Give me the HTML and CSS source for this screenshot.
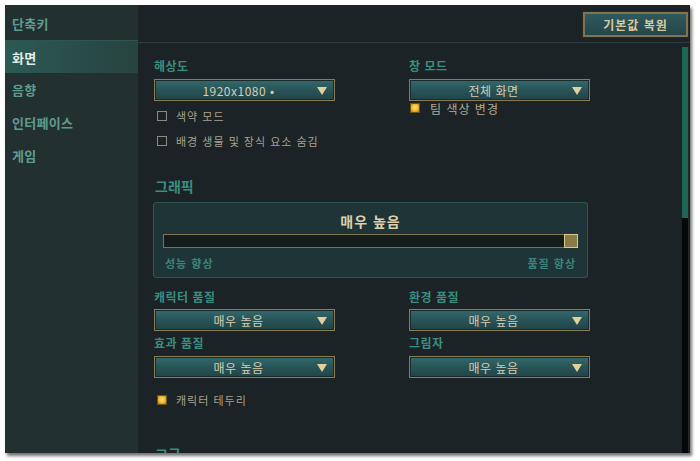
FILE: index.html
```html
<!DOCTYPE html>
<html lang="ko">
<head>
<meta charset="utf-8">
<link rel="stylesheet" href="styles.css">
</head>
<body>
<div class="window">
  <nav class="sidebar">
    <div class="nav-item">단축키</div>
    <div class="nav-item active">화면</div>
    <div class="nav-item">음향</div>
    <div class="nav-item">인터페이스</div>
    <div class="nav-item">게임</div>
  </nav>
  <div class="main">
    <header class="topbar">
      <button class="reset-btn">기본값 복원</button>
    </header>
    <div class="body-row">
      <div class="content">
        <div class="grid">
          <div class="col">
            <div class="label first">해상도</div>
            <div class="dropdown"><span class="dd-text">1920x1080 •</span><span class="arrow"></span></div>
            <div class="check gap"><span class="box"></span><span class="check-text">색약 모드</span></div>
            <div class="check gap"><span class="box"></span><span class="check-text">배경 생물 및 장식 요소 숨김</span></div>
          </div>
          <div class="col">
            <div class="label first">창 모드</div>
            <div class="dropdown"><span class="dd-text">전체 화면</span><span class="arrow"></span></div>
            <div class="check tight"><span class="box on"></span><span class="check-text">팀 색상 변경</span></div>
          </div>
        </div>

        <div class="heading">그래픽</div>
        <div class="quality-box">
          <div class="quality-value">매우 높음</div>
          <div class="track"><span class="thumb"></span></div>
          <div class="track-labels"><span>성능 향상</span><span>품질 향상</span></div>
        </div>

        <div class="grid">
          <div class="col">
            <div class="label after-box">캐릭터 품질</div>
            <div class="dropdown"><span class="dd-text">매우 높음</span><span class="arrow"></span></div>
            <div class="label">효과 품질</div>
            <div class="dropdown"><span class="dd-text">매우 높음</span><span class="arrow"></span></div>
          </div>
          <div class="col">
            <div class="label after-box">환경 품질</div>
            <div class="dropdown"><span class="dd-text">매우 높음</span><span class="arrow"></span></div>
            <div class="label">그림자</div>
            <div class="dropdown"><span class="dd-text">매우 높음</span><span class="arrow"></span></div>
          </div>
        </div>
        <div class="check outline-row"><span class="box on"></span><span class="check-text">캐릭터 테두리</span></div>
        <div class="heading advanced">고급</div>
      </div>
      <div class="scrollbar"><div class="thumb-bar"></div></div>
    </div>
  </div>
</div>
</body>
</html>
```

FILE: styles.css
```css
* { box-sizing: border-box; }
html, body { margin: 0; padding: 0; background: #ffffff; }
body {
  font-family: "Noto Sans CJK KR", "Noto Sans", sans-serif;
  width: 700px;
  height: 461px;
  overflow: hidden;
}
.window {
  margin: 5px 0 0 5px;
  width: 685px;
  height: 448px;
  display: flex;
  background: #1b2326;
  box-shadow: 2px 3px 3px rgba(0,0,0,0.55);
  overflow: hidden;
}
.sidebar {
  width: 133px;
  flex: none;
  background: #22302f;
  padding-top: 2px;
}
.nav-item {
  height: 33px;
  line-height: 33px;
  padding-left: 7px;
  font-size: 13px;
  font-weight: 700;
  color: #5f9c90;
  letter-spacing: 0.3px;
}
.nav-item.active {
  color: #e2ece6;
  background: linear-gradient(90deg, #2b5a55 0%, #2a4f4b 45%, #284340 100%);
  border-top: 1px solid #2f5550;
}
.main {
  flex: 1;
  display: flex;
  flex-direction: column;
  min-width: 0;
}
.topbar {
  height: 38px;
  flex: none;
  border-bottom: 1px solid #2c3b3d;
  display: flex;
  justify-content: flex-end;
  align-items: flex-start;
  padding: 7px 2px 0 0;
}
.reset-btn {
  width: 105px;
  height: 25px;
  border: 2px solid #7f7351;
  outline: 1px solid #2a2a22;
  background: linear-gradient(180deg, #2f5a5e 0%, #244649 100%);
  color: #d8caa0;
  font-family: "Noto Sans CJK KR", sans-serif;
  font-size: 12px;
  font-weight: 700;
  letter-spacing: 1px;
  padding: 0;
}
.body-row {
  flex: 1;
  display: flex;
  min-height: 0;
}
.content {
  flex: 1;
  padding-left: 16px;
  overflow: hidden;
}
.scrollbar {
  width: 8px;
  flex: none;
  margin-top: 4px;
  background: #060808;
  border-right: 2px solid #1e2629;
}
.thumb-bar {
  height: 171px;
  background: #1e6656;
}
.grid {
  display: grid;
  grid-template-columns: 255px 181px;
}
.label {
  font-size: 12px;
  line-height: 16px;
  height: 16px;
  font-weight: 700;
  color: #3a8e80;
  margin-top: 4px;
  margin-bottom: 5px;
  letter-spacing: 0.5px;
}
.label.first { margin-top: 15px; margin-bottom: 5px; }
.label.after-box { margin-top: 11px; margin-bottom: 4px; }
.dropdown {
  width: 181px;
  height: 22px;
  border: 1px solid #8a7c56;
  box-shadow: inset 0 0 0 1px #1a2a2a;
  background: linear-gradient(180deg, #336a6d 0%, #285457 50%, #214447 100%);
  display: flex;
  align-items: center;
  position: relative;
  padding-right: 12px;
}
.dd-text {
  flex: 1;
  text-align: center;
  font-size: 12px;
  color: #d6cdb2;
  letter-spacing: 0.5px;
}
.arrow {
  position: absolute;
  right: 7px;
  top: 7px;
  width: 0;
  height: 0;
  border-left: 5px solid transparent;
  border-right: 5px solid transparent;
  border-top: 8px solid #e2d09c;
}
.check {
  display: flex;
  align-items: center;
  height: 20px;
  padding-left: 3px;
}
.check.gap { margin-top: 5px; }
.check.tight { height: 14px; padding-left: 1px; }
.box {
  width: 10px;
  height: 10px;
  border: 1px solid #8b8b82;
  flex: none;
}
.box.on {
  border: 1px solid #6b5418;
  background: radial-gradient(circle at 50% 45%, #ffe37a 0%, #f0b72c 55%, #a87410 100%);
}
.check-text {
  margin-left: 9px;
  font-size: 11px;
  color: #a8a290;
  letter-spacing: 1px;
}
.check.tight .check-text { margin-left: 10px; color: #b2aa92; font-size: 12px; }
.heading {
  margin-top: 26px;
  font-size: 14px;
  line-height: 18px;
  height: 18px;
  font-weight: 700;
  color: #3a8e80;
  padding-left: 1px;
}
.quality-box {
  margin-top: 7px;
  margin-left: -1px;
  width: 435px;
  height: 76px;
  border: 1px solid #2e5752;
  border-radius: 3px;
  background: #1f3437;
  padding: 0 9px;
}
.quality-value {
  text-align: center;
  font-size: 14px;
  font-weight: 700;
  color: #ddd0aa;
  line-height: 20px;
  margin-top: 8px;
  letter-spacing: 1px;
}
.track {
  position: relative;
  margin-top: 3px;
  height: 14px;
  border: 1px solid #7c7350;
  background: #141c1c;
}
.thumb {
  position: absolute;
  right: -1px;
  top: -1px;
  width: 14px;
  height: 14px;
  border: 1px solid #d8c98c;
  background: #8a7a48;
}
.track-labels {
  display: flex;
  justify-content: space-between;
  font-size: 11px;
  font-weight: 700;
  color: #3a8478;
  line-height: 16px;
  margin-top: 7px;
  padding: 0 2px;
  letter-spacing: 1px;
}
.outline-row {
  margin-top: 13px;
  height: 18px;
}
.outline-row .check-text { color: #a8a290; }
.heading.advanced { margin-top: 36px; }
```
